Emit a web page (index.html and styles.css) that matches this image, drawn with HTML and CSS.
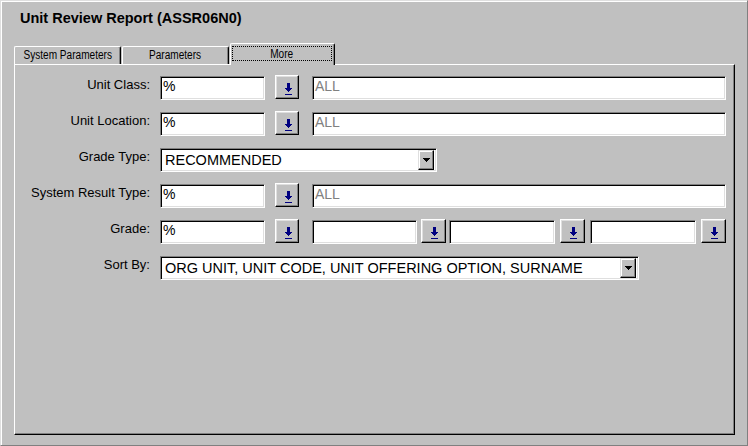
FILE: index.html
```html
<!DOCTYPE html>
<html lang="en">
<head>
    <meta charset="UTF-8">
    <title>Unit Review Report</title>
    <link rel="stylesheet" href="styles.css">
</head>
<body>
    <div class="window">
        <h1 class="title">Unit Review Report (ASSR06N0)</h1>

        <div class="tabs">
            <div class="tab tab-system"><span class="tab-text">System Parameters</span></div>
            <div class="tab tab-params"><span class="tab-text">Parameters</span></div>
            <div class="tab tab-more active"><div class="focus"><span class="tab-text">More</span></div></div>
        </div>

        <div class="panel">
            <div class="row">
                <label class="label">Unit Class:</label>
                <div class="field code">%</div>
                <button class="lookup"><svg width="9" height="12" viewBox="0 0 9 12"><path d="M3 0h3v5h2v1h-1v1h-1v1h-1v1h-1v-1h-1v-1h-1v-1h-1v-1h2zM1 11h7v1h-7z" fill="#000080"/></svg></button>
                <div class="field desc disabled">ALL</div>
            </div>

            <div class="row">
                <label class="label">Unit Location:</label>
                <div class="field code">%</div>
                <button class="lookup"><svg width="9" height="12" viewBox="0 0 9 12"><path d="M3 0h3v5h2v1h-1v1h-1v1h-1v1h-1v-1h-1v-1h-1v-1h-1v-1h2zM1 11h7v1h-7z" fill="#000080"/></svg></button>
                <div class="field desc disabled">ALL</div>
            </div>

            <div class="row">
                <label class="label">Grade Type:</label>
                <div class="field select grade-type">
                    <span class="select-text">RECOMMENDED</span>
                    <span class="drop"><svg width="7" height="4" viewBox="0 0 7 4"><path d="M0 0h7v1h-1v1h-1v1h-1v1h-1v-1h-1v-1h-1v-1h-1z" fill="#000"/></svg></span>
                </div>
            </div>

            <div class="row">
                <label class="label">System Result Type:</label>
                <div class="field code">%</div>
                <button class="lookup"><svg width="9" height="12" viewBox="0 0 9 12"><path d="M3 0h3v5h2v1h-1v1h-1v1h-1v1h-1v-1h-1v-1h-1v-1h-1v-1h2zM1 11h7v1h-7z" fill="#000080"/></svg></button>
                <div class="field desc disabled">ALL</div>
            </div>

            <div class="row">
                <label class="label">Grade:</label>
                <div class="field code">%</div>
                <button class="lookup"><svg width="9" height="12" viewBox="0 0 9 12"><path d="M3 0h3v5h2v1h-1v1h-1v1h-1v1h-1v-1h-1v-1h-1v-1h-1v-1h2zM1 11h7v1h-7z" fill="#000080"/></svg></button>
                <div class="field grade grade-first"></div>
                <button class="lookup small first"><svg width="9" height="12" viewBox="0 0 9 12"><path d="M3 0h3v5h2v1h-1v1h-1v1h-1v1h-1v-1h-1v-1h-1v-1h-1v-1h2zM1 11h7v1h-7z" fill="#000080"/></svg></button>
                <div class="field grade grade-second"></div>
                <button class="lookup small"><svg width="9" height="12" viewBox="0 0 9 12"><path d="M3 0h3v5h2v1h-1v1h-1v1h-1v1h-1v-1h-1v-1h-1v-1h-1v-1h2zM1 11h7v1h-7z" fill="#000080"/></svg></button>
                <div class="field grade grade-third"></div>
                <button class="lookup small"><svg width="9" height="12" viewBox="0 0 9 12"><path d="M3 0h3v5h2v1h-1v1h-1v1h-1v1h-1v-1h-1v-1h-1v-1h-1v-1h2zM1 11h7v1h-7z" fill="#000080"/></svg></button>
            </div>

            <div class="row">
                <label class="label">Sort By:</label>
                <div class="field select sort-by">
                    <span class="select-text">ORG UNIT, UNIT CODE, UNIT OFFERING OPTION, SURNAME</span>
                    <span class="drop"><svg width="7" height="4" viewBox="0 0 7 4"><path d="M0 0h7v1h-1v1h-1v1h-1v1h-1v-1h-1v-1h-1v-1h-1z" fill="#000"/></svg></span>
                </div>
            </div>
        </div>
    </div>
</body>
</html>
```

FILE: styles.css
```css
body {
    margin: 0;
    font-family: "Liberation Sans", Arial, sans-serif;
    background: #c0c0c0;
}

.window {
    width: 748px;
    height: 446px;
    box-sizing: border-box;
    background: #c0c0c0;
    border: 1px solid;
    border-color: #dfdfdf #808080 #808080 #dfdfdf;
    box-shadow: inset 1px 1px #ffffff;
    padding: 9px 12px 10px 13px;
    display: flex;
    flex-direction: column;
}

.title {
    margin: 0;
    padding-left: 6px;
    font-size: 14.5px;
    line-height: 17px;
    font-weight: bold;
    color: #000;
}

/* Tabs */
.tabs {
    display: flex;
    height: 21px;
    margin-top: 16px;
    position: relative;
    z-index: 1;
}

.tab {
    box-sizing: border-box;
    height: 18px;
    margin-top: 3px;
    background: #c0c0c0;
    border-top: 1px solid #ffffff;
    border-left: 1px solid #ffffff;
    border-right: 1px solid #000000;
    box-shadow: inset -1px 0 #808080;
    border-radius: 2px 2px 0 0;
    text-align: center;
    font-size: 12px;
    line-height: 17px;
    color: #000;
}

.tab-system {
    width: 107px;
}

.tab-params {
    width: 107px;
    margin-left: 1px;
}

.tab-more {
    width: 105px;
    margin-left: 1px;
}

.tab.active {
    height: 22px;
    margin-top: 0;
}

.tab-text {
    display: inline-block;
    transform: scaleX(0.84);
    white-space: nowrap;
}

.focus {
    height: 15px;
    margin: 2px 2px 0 1px;
    padding-top: 1px;
    box-sizing: border-box;
    border: 1px dotted #000;
    line-height: 12px;
}

/* Panel */
.panel {
    flex: 1;
    background: #c0c0c0;
    border: 1px solid;
    border-color: #ffffff #000000 #000000 #ffffff;
    box-shadow: inset -1px -1px #808080;
    padding: 11px 8px 0 0;
    display: flex;
    flex-direction: column;
    gap: 12px;
}

.row {
    display: flex;
    height: 24px;
}

.label {
    width: 135px;
    margin-right: 10px;
    text-align: right;
    font-size: 13px;
    line-height: 17px;
    color: #000;
    white-space: nowrap;
}

.field {
    box-sizing: border-box;
    flex-shrink: 0;
    height: 24px;
    background: #ffffff;
    border: 1px solid;
    border-color: #808080 #ffffff #ffffff #808080;
    box-shadow: inset 1px 1px #000000, inset -1px -1px #dfdfdf;
    padding: 1px 2px 0 2px;
    font-size: 14px;
    line-height: 16px;
    color: #000;
    white-space: nowrap;
    overflow: hidden;
}

.code {
    width: 105px;
}

.desc {
    flex: 1;
    margin-left: 13px;
}

.disabled {
    color: #808080;
}

.lookup {
    box-sizing: border-box;
    flex-shrink: 0;
    width: 24px;
    height: 24px;
    margin: -1px 0 0 10px;
    padding: 3px 0 0 2px;
    background: #c0c0c0;
    border: 1px solid;
    border-color: #ffffff #000000 #000000 #ffffff;
    box-shadow: inset -1px -1px #808080, inset 1px 1px #dfdfdf;
    display: flex;
    align-items: center;
    justify-content: center;
}

.lookup svg {
    display: block;
}

/* Grade range fields */
.grade {
    width: 106px;
    margin-left: 5px;
}

.grade-first {
    width: 105px;
    margin-left: 13px;
}

.grade-second {
    margin-left: 3px;
}

.lookup.small {
    width: 25px;
    margin-left: 5px;
}

.lookup.small.first {
    margin-left: 4px;
}

/* Drop-down selects */
.select {
    display: flex;
    align-items: flex-start;
    padding: 2px 2px 0 4px;
}

.select-text {
    flex: 1;
    font-size: 14.5px;
    line-height: 18px;
}

.grade-type {
    width: 277px;
}

.sort-by {
    width: 479px;
}

.drop {
    box-sizing: border-box;
    width: 16px;
    height: 20px;
    margin-top: -1px;
    background: #c0c0c0;
    border: 1px solid;
    border-color: #dfdfdf #000000 #000000 #dfdfdf;
    box-shadow: inset -1px -1px #808080, inset 1px 1px #ffffff;
    display: flex;
    align-items: center;
    justify-content: center;
}

.drop svg {
    display: block;
}
```
